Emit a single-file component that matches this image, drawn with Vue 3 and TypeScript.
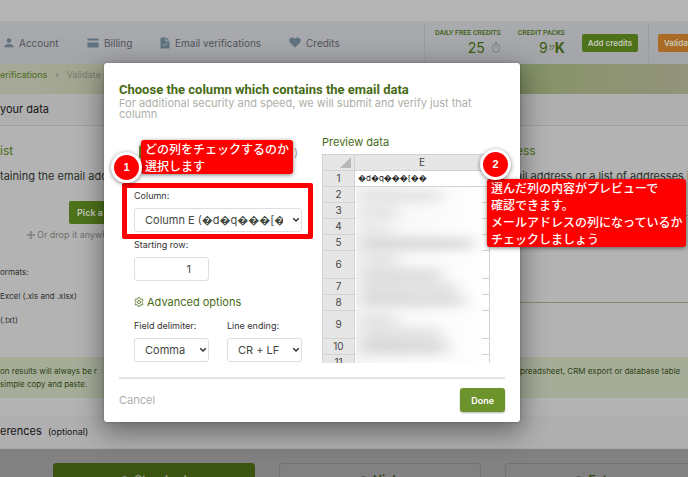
<script setup lang="ts">
import { ref } from 'vue'

interface PreviewRow {
  n: number
  tall?: boolean
  text?: string
}

interface Smudge {
  y: number
  w: number
  o: number
}

const column = ref('e')
const startRow = ref('1')
const delimiter = ref('comma')
const ending = ref('crlf')
const level = ref('Standard')
const addresses = ref('')

const levels: string[] = ['Standard', 'High', 'Extreme']

const rows: PreviewRow[] = [
  { n: 1, text: '\uFFFDd\uFFFDq\uFFFD\uFFFD\uFFFD[\uFFFD\uFFFD' },
  { n: 2 },
  { n: 3 },
  { n: 4 },
  { n: 5 },
  { n: 6, tall: true },
  { n: 7 },
  { n: 8 },
  { n: 9, tall: true },
  { n: 10 },
  { n: 11 },
]

const smudges: Smudge[] = [
  { y: 3, w: 80, o: 0.08 },
  { y: 19, w: 36, o: 0.07 },
  { y: 35, w: 30, o: 0.06 },
  { y: 50, w: 112, o: 0.12 },
  { y: 66, w: 36, o: 0.08 },
  { y: 81, w: 80, o: 0.1 },
  { y: 94, w: 96, o: 0.09 },
  { y: 107, w: 104, o: 0.11 },
  { y: 127, w: 36, o: 0.08 },
  { y: 141, w: 80, o: 0.09 },
  { y: 154, w: 86, o: 0.12 },
]
</script>

<template>
  <div class="page">
    <div class="topstrip"></div>
    <header class="nav">
      <nav class="links">
        <a href="#" class="l-account">
          <svg width="10" height="10" viewBox="0 0 10 10"><circle cx="5" cy="2.6" r="2.3" /><path d="M0.3 9.2C0.3 6.8 3 6 5 6s4.7.8 4.7 3.2z" /></svg>
          Account
        </a>
        <a href="#" class="l-billing">
          <svg width="12" height="10" viewBox="0 0 12 10"><path fill-rule="evenodd" d="M1.2.4h9.600Q11.600.4 11.600 1.200v7.600q0 .8-.8.8H1.200Q.4 9.600.4 8.800V1.200Q.4.4 1.200.4zM.4 2.600v2h11.200v-2z" /></svg>
          Billing
        </a>
        <a href="#" class="l-verify">
          <svg width="10" height="12" viewBox="0 0 10 12"><path d="M1.500.4h4.700l3.300 3.300v6.800q0 1-1 1h-7q-1 0-1-1v-9.100q0-1 1-1z" /><path class="cut" d="M5.900.8v3.200h3.200M2.700 7.400l1.600 1.600 3-3.100" /></svg>
          Email verifications
        </a>
        <a href="#">
          <svg width="12" height="11" viewBox="0 0 12 11"><path d="M6 10.600 1.300 6C-1 3.600.6.500 3.200.500 4.500.500 5.500 1.200 6 2 6.500 1.200 7.500.5 8.800.5 11.400.5 13 3.600 10.700 6z" /></svg>
          Credits
        </a>
      </nav>
      <div class="credits">
        <div class="stat">
          <span class="cap">DAILY FREE CREDITS</span>
          <span class="num">25
            <svg class="clock" width="10" height="11" viewBox="0 0 10 11"><circle cx="5" cy="6.300" r="3.900" /><path d="M3.700.6h2.600M5 .6v1.800M5 4.300v2.200M8 2.600l.8.8" /></svg>
          </span>
        </div>
        <div class="stat">
          <span class="cap">CREDIT PACKS</span>
          <span class="num tight">9<small>.17</small><b>K</b></span>
        </div>
        <button type="button" class="mini">Add credits</button>
      </div>
      <div class="validate"><button type="button" class="mini orange">Validate</button></div>
    </header>

    <div class="crumbs">
      <a href="#">erifications</a><span class="sep">›</span><span>Validate</span>
    </div>

    <h2 class="bar">your data</h2>

    <main class="cols">
      <section class="left">
        <h3>ist</h3>
        <p class="lead">taining the email add</p>
        <button type="button" class="pick">Pick a file</button>
        <p class="drop">
          <svg width="8" height="8" viewBox="0 0 8 8"><path d="M4 .5v7M.5 4h7M3 1.500l1-1 1 1M3 6.500l1 1 1-1M1.500 3l-1 1 1 1M6.500 3l1 1-1 1" /></svg>
          Or drop it anywhere
        </p>
        <ul>
          <li>ormats:</li>
          <li>Excel (.xls and .xlsx)</li>
          <li>(.txt)</li>
        </ul>
      </section>
      <section class="right">
        <h3>ess</h3>
        <p class="lead">ail address or a list of addresses i</p>
        <textarea v-model="addresses" aria-label="Email addresses"></textarea>
      </section>
    </main>

    <div class="notice">
      <p>on results will always be r<br />simple copy and paste.</p>
      <p class="more">preadsheet, CRM export or database table</p>
    </div>

    <h2 class="bar prefs">erences <small>(optional)</small></h2>

    <div class="levels">
      <label v-for="l in levels" :key="l" :class="{ on: level === l }">
        <input v-model="level" type="radio" name="level" :value="l" />{{ l }}
      </label>
    </div>

    <div class="overlay">
      <form class="dialog" role="dialog" aria-labelledby="dlg-title" @submit.prevent>
        <h1 id="dlg-title">Choose the column which contains the email data</h1>
        <p class="sub">For additional security and speed, we will submit and verify just that column</p>

        <div class="body">
          <div class="form">
            <div class="source"><i></i><span>)</span></div>
            <div class="field wide">
              <label for="col">Column:</label>
              <div class="pickbox">
                <select id="col" v-model="column">
                  <option value="e">Column E (&#xFFFD;d&#xFFFD;q&#xFFFD;&#xFFFD;&#xFFFD;[&#xFFFD;&#xFFFD;)</option>
                </select>
                <svg width="8" height="6" viewBox="0 0 8 6"><path d="M1.200 1.200 4 4l2.800-2.800" /></svg>
              </div>
            </div>
            <div class="field start">
              <label for="row">Starting row:</label>
              <input id="row" v-model="startRow" type="text" inputmode="numeric" />
            </div>
            <h4>
              <svg width="10" height="10" viewBox="0 0 10 10"><path d="M4.200.6h1.600l.3 1.200 1 .5 1.200-.4.8 1.400-.9.9v1.600l.9.9-.8 1.400-1.200-.4-1 .5-.3 1.200H4.200l-.3-1.200-1-.5-1.200.4-.8-1.400.9-.9V4.200l-.9-.9.8-1.400 1.200.4 1-.5z" /><circle cx="5" cy="5" r="1.500" /></svg>
              Advanced options
            </h4>
            <div class="field">
              <label for="delim">Field delimiter:</label>
              <div class="pickbox">
                <select id="delim" v-model="delimiter"><option value="comma">Comma</option></select>
                <svg width="8" height="6" viewBox="0 0 8 6"><path d="M1.200 1.200 4 4l2.800-2.800" /></svg>
              </div>
            </div>
            <div class="field">
              <label for="eol">Line ending:</label>
              <div class="pickbox">
                <select id="eol" v-model="ending"><option value="crlf">CR + LF</option></select>
                <svg width="8" height="6" viewBox="0 0 8 6"><path d="M1.200 1.200 4 4l2.800-2.800" /></svg>
              </div>
            </div>
          </div>

          <div class="preview">
            <h4>Preview data</h4>
            <div class="sheet">
              <table>
                <thead>
                  <tr>
                    <th><svg width="11" height="11" viewBox="0 0 11 11"><path d="M11 0v11H0z" /></svg></th>
                    <th>E</th>
                  </tr>
                </thead>
                <tbody>
                  <tr v-for="r in rows" :key="r.n" :class="{ tall: r.tall }">
                    <th scope="row">{{ r.n }}</th>
                    <td>{{ r.text }}</td>
                  </tr>
                </tbody>
              </table>
              <svg class="veil" width="126" height="177" viewBox="0 0 126 177">
                <defs>
                  <filter id="soft" filterUnits="userSpaceOnUse" x="-30" y="-30" width="190" height="240"><feGaussianBlur stdDeviation="8 5" /></filter>
                  <linearGradient id="wash">
                    <stop offset="0" stop-color="#f5f5f5" />
                    <stop offset="0.6" stop-color="#fafafa" />
                    <stop offset="1" stop-color="#fefefe" />
                  </linearGradient>
                </defs>
                <rect width="126" height="177" fill="url(#wash)" />
                <g filter="url(#soft)">
                  <rect v-for="s in smudges" :key="s.y" x="5" :y="s.y" :width="s.w" height="13" :fill-opacity="s.o" />
                </g>
              </svg>
            </div>
          </div>
        </div>

        <footer>
          <a href="#">Cancel</a>
          <button type="submit">Done</button>
        </footer>
      </form>

      <div class="frame"></div>
      <p class="note note-1">どの列をチェックするのか<br />選択します</p>
      <span class="badge badge-1">1</span>
      <p class="note note-2">選んだ列の内容がプレビューで<br />確認できます。<br />メールアドレスの列になっているか<br />チェックしましょう</p>
      <span class="badge badge-2">2</span>
    </div>
  </div>
</template>

<style>
body {
  background: #818181;
}
</style>

<style scoped>
* {
  box-sizing: border-box;
}

.page {
  position: relative;
  height: 100vh;
  overflow: hidden;
  background: #818181;
  color: #2b2e2b;
  font-family: Inter, 'Open Sans', 'DejaVu Sans', sans-serif;
  font-size: 11px;
}

h1, h2, h3, h4, p, ul {
  margin: 0;
  padding: 0;
  font-weight: 400;
}

a {
  text-decoration: none;
}

button, input, select, textarea {
  font-family: inherit;
}

.topstrip {
  height: 21px;
  background: #b5b5b5;
}

.nav {
  display: flex;
  height: 43px;
  background: linear-gradient(#a9abae, #a2a4a7);
  white-space: nowrap;
  overflow: hidden;
}

.links {
  display: flex;
  flex: none;
  align-items: center;
  width: 424px;
  padding-left: 4px;
  font-size: 10px;
}

.links a {
  display: flex;
  align-items: center;
  gap: 5px;
  color: #50555a;
}

.links svg {
  fill: #5e7280;
}

.links .cut {
  fill: none;
  stroke: #a6a9ac;
  stroke-width: 1;
}

.l-account {
  width: 83px;
}

.l-billing {
  width: 73px;
}

.l-verify {
  width: 129px;
}

.credits {
  display: flex;
  flex: none;
  align-items: center;
  gap: 17px;
  width: 224px;
  margin: 2px 0;
  padding-left: 10px;
  border-left: 1px solid #9a9c9f;
}

.stat {
  display: flex;
  flex-direction: column;
  align-items: flex-end;
  color: #3d5c12;
}

.cap {
  font-family: Roboto, sans-serif;
  font-size: 7px;
  font-weight: 500;
  line-height: 10px;
}

.num {
  display: flex;
  align-items: center;
  gap: 6px;
  font-size: 14px;
  line-height: 19px;
}

.tight {
  gap: 0;
}

.num small {
  font-size: 6px;
}

.clock {
  fill: none;
  stroke: #7f8281;
}

.mini {
  flex: none;
  height: 18px;
  padding: 0 6px;
  border: 0;
  border-radius: 2px;
  background: #4d721a;
  color: #c5cbbb;
  font-size: 8px;
  font-weight: 600;
}

.validate {
  display: flex;
  align-items: center;
  margin: 2px 0;
  padding-left: 9px;
  border-left: 1px solid #9a9c9f;
}

.orange {
  background: #ab6a25;
}

.crumbs {
  display: flex;
  gap: 8px;
  height: 30px;
  padding-top: 4px;
  background: linear-gradient(90deg, #a6a998 0, #a0a58e 15%, #7f8f63 74%, #8d9470 85%, #92937b);
  color: #747870;
  font-size: 9px;
  line-height: 13px;
}

.crumbs a {
  color: #4a6b1b;
}

.bar {
  height: 32px;
  border-bottom: 1px solid #9f9f9f;
  background: #afafaf;
  color: #151515;
  font-size: 11px;
  line-height: 31px;
}

.prefs {
  height: 33px;
  border-bottom-color: #a8a8a8;
}

.prefs small {
  margin-left: 3px;
  font-size: 9px;
}

.cols {
  display: grid;
  grid-template-columns: 3fr 1fr;
  height: 231px;
  background: #b3b3b3;
  white-space: nowrap;
}

.left, .right {
  min-width: 0;
  padding-top: 17px;
}

h3 {
  color: #4a6d18;
  font-size: 12px;
  line-height: 16px;
}

.lead {
  margin-top: 9px;
  line-height: 16px;
}

.pick {
  display: block;
  height: 23px;
  margin: 17px 0 0 69px;
  padding: 0 8px;
  border: 0;
  border-radius: 2px;
  background: #4d721a;
  color: #c5cbbb;
  font-size: 9px;
  font-weight: 600;
}

.drop {
  display: flex;
  align-items: center;
  gap: 2px;
  margin: 5px 0 0 27px;
  color: #6e706e;
  font-size: 9px;
  line-height: 12px;
}

.drop svg {
  fill: none;
  stroke: #6e706e;
}

ul {
  margin-top: 19px;
  list-style: none;
  font-size: 8px;
  line-height: 24px;
}

textarea {
  display: block;
  width: calc(100% + 12px);
  height: 88px;
  margin-top: 31px;
  border: 1px solid #80906a;
  background: transparent;
  resize: none;
}

.notice {
  display: grid;
  grid-template-columns: 3fr 1fr;
  height: 41px;
  margin-bottom: 18px;
  padding-top: 8px;
  background: #a5ad99;
  box-shadow: 0 18px 0 #b3b3b3;
  color: #2f4312;
  font-size: 8px;
  line-height: 13px;
  white-space: nowrap;
}

.more {
  padding-left: 4px;
}

.levels {
  display: grid;
  grid-template-columns: repeat(3, 1fr);
  gap: 24px;
  margin: 14px -19px 0 53px;
}

.levels label {
  display: flex;
  align-items: center;
  justify-content: center;
  gap: 6px;
  height: 32px;
  border: 1px solid #727272;
  border-radius: 3px;
  color: #2f4312;
  font-size: 12px;
  font-weight: 600;
}

.levels .on {
  border-color: #3b5412;
  background: #3b5412;
  color: #8d9679;
}

.levels input {
  width: 7px;
  height: 7px;
  margin: 0;
  border: 1px solid #525252;
  border-radius: 50%;
  appearance: none;
}

.levels .on input {
  border-color: #8d96a0;
}

.overlay {
  position: absolute;
  inset: 0;
  padding: 63px 0 0 104px;
}

.dialog {
  width: min(416px, 100%);
  padding: 18px 15px 10px;
  border-radius: 3px;
  background: #fff;
  box-shadow: 0 8px 26px 2px rgba(0, 0, 0, 0.42), 0 0 3px rgba(0, 0, 0, 0.25);
}

h1 {
  color: #476b16;
  font-family: Roboto, sans-serif;
  font-size: 13px;
  font-weight: 700;
  line-height: 17px;
}

.sub {
  color: #adb0a8;
  font-size: 11px;
  line-height: 11px;
}

.body {
  display: flex;
  justify-content: space-between;
  height: 228px;
  margin-top: 14px;
  padding: 0 15px;
}

.form {
  display: grid;
  grid-template-columns: 75px 75px;
  column-gap: 18px;
  align-content: start;
}

.source {
  display: flex;
  grid-column: 1 / -1;
  align-items: flex-start;
  justify-content: space-between;
  height: 56px;
  padding: 11px 4px 0 5px;
  color: #999;
}

.source i {
  width: 30px;
  height: 14px;
  border-radius: 3px;
  background: #6d932c;
}

.wide {
  grid-column: 1 / -1;
}

.start {
  margin-top: 6px;
}

.field {
  display: flex;
  flex-direction: column;
  height: 43px;
}

.field label {
  margin-bottom: 6px;
  color: #333;
  font-size: 9px;
  line-height: 12px;
  white-space: nowrap;
}

.pickbox {
  position: relative;
}

.pickbox select, .field input {
  width: 100%;
  height: 24px;
  border: 1px solid #dcdfe2;
  border-radius: 3px;
  background: #fff;
  color: #43493f;
  font-size: 11px;
}

.pickbox select {
  padding: 0 18px 0 10px;
  appearance: none;
}

.field input {
  padding: 0 17px;
  text-align: right;
}

.pickbox svg {
  position: absolute;
  top: 9px;
  right: 2px;
  fill: none;
  stroke: #333;
  stroke-width: 1.5;
  pointer-events: none;
}

h4 {
  color: #476b16;
  font-size: 11px;
  line-height: 16px;
}

.form h4 {
  display: flex;
  grid-column: 1 / -1;
  align-items: center;
  gap: 3px;
  margin: 12px 0 10px;
}

.form h4 svg {
  fill: none;
  stroke: #6d8a44;
}

.preview {
  width: 168px;
}

.preview h4 {
  margin-bottom: 4px;
}

.sheet {
  position: relative;
  height: 209px;
  overflow: hidden;
}

table {
  width: 100%;
  border-collapse: separate;
  border-spacing: 0;
  table-layout: fixed;
}

th, td {
  height: 16px;
  padding: 0;
  border: solid #d3d3d3;
  border-width: 0 1px 1px 0;
  font-size: 10px;
  font-weight: 400;
  line-height: 13px;
}

th {
  background: #e6e6e6;
  color: #444;
}

thead th:first-child {
  width: 33px;
  text-align: right;
}

thead th {
  height: 17px;
  border-top-width: 1px;
}

thead svg {
  display: block;
  margin: 0 3px 0 auto;
  fill: #b8b8b8;
}

tr > :first-child {
  border-left-width: 1px;
}

td {
  padding-left: 3px;
  color: #222;
  font-size: 8px;
  white-space: nowrap;
}

.tall th {
  height: 28px;
}

.veil {
  position: absolute;
  top: 33px;
  left: 34px;
}

footer {
  display: flex;
  align-items: center;
  justify-content: space-between;
  margin-top: 15px;
  padding-top: 9px;
  border-top: 2px solid #e2e2df;
}

footer a {
  color: #acafa8;
}

footer button {
  height: 24px;
  padding: 0 11px;
  border: 0;
  border-radius: 3px;
  background: #6d932c;
  box-shadow: 0 1px 2px rgba(0, 0, 0, 0.3);
  color: #fff;
  font-size: 9px;
  font-weight: 600;
}

.frame {
  position: absolute;
  top: 183px;
  left: 122px;
  width: 191px;
  height: 56px;
  border: 5px solid #f00;
  border-radius: 2px;
  pointer-events: none;
}

.note {
  position: absolute;
  padding: 0 4px;
  border-radius: 3px;
  background: #f00;
  box-shadow: 0 1px 4px rgba(0, 0, 0, 0.5);
  color: #fff;
  font-family: 'Noto Sans CJK JP', sans-serif;
  font-size: 12px;
  font-weight: 500;
  line-height: 17px;
  white-space: nowrap;
}

.note-1 {
  top: 140px;
  left: 141px;
}

.note-2 {
  top: 179px;
  left: 487px;
}

.badge {
  position: absolute;
  width: 31px;
  height: 31px;
  border: 3px solid #fff;
  border-radius: 50%;
  background: #f00;
  box-shadow: 0 1px 4px rgba(0, 0, 0, 0.5);
  color: #fff;
  font-family: 'Liberation Sans', sans-serif;
  font-size: 11px;
  font-weight: 700;
  line-height: 24px;
  text-align: center;
}

.badge-1 {
  top: 152px;
  left: 111px;
}

.badge-2 {
  top: 149px;
  left: 480px;
}
</style>
